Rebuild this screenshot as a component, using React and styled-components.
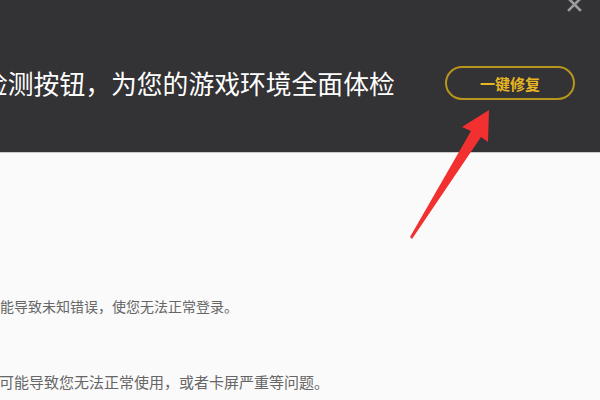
import styled, { createGlobalStyle } from "styled-components";

const GlobalStyle = createGlobalStyle`
  html, body {
    margin: 0;
    padding: 0;
    background: #fafafa;
  }
  body {
    font-family: "Noto Sans CJK SC", "Noto Sans", sans-serif;
  }
`;

function App() {
  return (
    <>
      <GlobalStyle />
      <Page>
        <Header>
          <Headline>检测按钮，为您的游戏环境全面体检</Headline>
          <FixButton>一键修复</FixButton>
          <Close aria-label="关闭">
            <svg width="15" height="15" viewBox="0 0 15 15">
              <path d="M2 2 L13 13 M13 2 L2 13" stroke="#9c9c9e" strokeWidth="2.6" strokeLinecap="square" />
            </svg>
          </Close>
        </Header>
        <Body>
          <Line size={14} shift={0}>能导致未知错误，使您无法正常登录。</Line>
          <Line size={15} shift={-1}>可能导致您无法正常使用，或者卡屏严重等问题。</Line>
        </Body>
        {/* red arrow pointing at the button */}
        <Arrow width="600" height="400" viewBox="0 0 600 400">
          <polygon
            points="489,110 488,142 481,137 412,239 410,237 471,131 462,127"
            fill="#f2302f"
          />
        </Arrow>
      </Page>
    </>
  );
}
export default App;

/* styled-components */

const Page = styled.div`
  position: relative;
  width: 600px;
  height: 400px;
  overflow: hidden;
  background: #fafafa;
`;

const Header = styled.header`
  position: relative;
  height: 153px;
  display: flex;
  align-items: center;
  padding-top: 14px;
  box-sizing: border-box;
  background-color: #333235;
  border-bottom: 1px solid #c9c9c9;
`;

const Headline = styled.h1`
  margin: 0 0 0 -18px;
  font-size: 25.8px;
  font-weight: 400;
  line-height: 30px;
  color: #ffffff;
  white-space: nowrap;
`;

const FixButton = styled.button`
  margin-left: auto;
  margin-right: 25px;
  width: 130px;
  height: 34px;
  border: 2px solid #b8961c;
  border-radius: 17px;
  background: transparent;
  color: #e8b623;
  font-family: "Noto Sans CJK SC", sans-serif;
  font-size: 15px;
  font-weight: 700;
  cursor: pointer;
`;

const Close = styled.div`
  position: absolute;
  top: -3px;
  right: 18px;
  width: 15px;
  height: 15px;
  display: flex;
`;

const Body = styled.main`
  padding-top: 143px;
  display: flex;
  flex-direction: column;
  gap: 56px;
`;

const Line = styled.p`
  margin: 0 0 0 ${(p) => p.shift}px;
  font-size: ${(p) => p.size}px;
  line-height: 20px;
  color: #666666;
  white-space: nowrap;
`;

const Arrow = styled.svg`
  position: absolute;
  left: 0;
  top: 0;
  pointer-events: none;
`;
